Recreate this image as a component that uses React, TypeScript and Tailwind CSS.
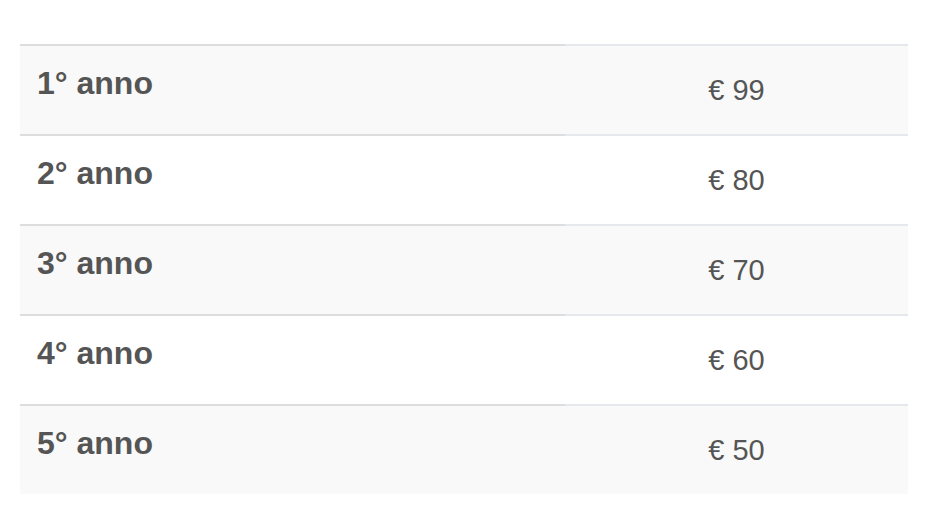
import React from 'react';

const rows = [
  { label: '1° anno', price: '€ 99' },
  { label: '2° anno', price: '€ 80' },
  { label: '3° anno', price: '€ 70' },
  { label: '4° anno', price: '€ 60' },
  { label: '5° anno', price: '€ 50' },
];

export default function App() {
  return (
    <div className="min-h-[526px] bg-white px-[20px] pt-[44px] pr-[22px] font-['Liberation_Sans',Arial,sans-serif] text-[#555]">
      <div className="flex flex-col">
        {rows.map((row, i) => (
          <div key={row.label} className={`flex h-[90px] ${i % 2 === 0 ? 'bg-[#f9f9f9]' : 'bg-white'}`}>
            <div className="w-[545px] border-t-2 border-[#dddddd] pl-[17px] pt-[19px]">
              <span className="text-[32px] font-bold leading-[36px]">{row.label}</span>
            </div>
            <div className="flex-1 border-t-2 border-[#e5e8ec] pt-[27px] text-center">
              <span className="text-[29px] leading-[34px]">{row.price}</span>
            </div>
          </div>
        ))}
      </div>
    </div>
  );
}
